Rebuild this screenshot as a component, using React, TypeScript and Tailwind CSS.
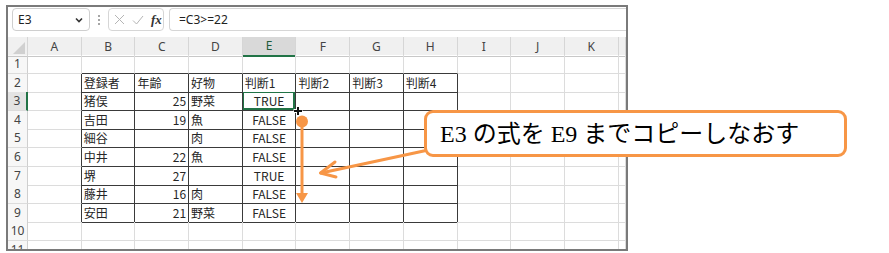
const COLS = ["A", "B", "C", "D", "E", "F", "G", "H", "I", "J", "K", ""];
const ROWS = [1, 2, 3, 4, 5, 6, 7, 8, 9, 10, 11];

const DATA: Record<number, string[]> = {
  2: ["", "登録者", "年齢", "好物", "判断1", "判断2", "判断3", "判断4"],
  3: ["", "猪俣", "25", "野菜", "TRUE"],
  4: ["", "吉田", "19", "魚", "FALSE"],
  5: ["", "細谷", "", "肉", "FALSE"],
  6: ["", "中井", "22", "魚", "FALSE"],
  7: ["", "堺", "27", "", "TRUE"],
  8: ["", "藤井", "16", "肉", "FALSE"],
  9: ["", "安田", "21", "野菜", "FALSE"],
};

const cellFont = { fontFamily: '"Noto Sans CJK JP", "Noto Sans", sans-serif' };

function Cell({ row, col }: { row: number; col: number }) {
  const inTable = row >= 2 && row <= 9 && col >= 1 && col <= 7;
  const darkRight = inTable || (col === 0 && row >= 2 && row <= 9);
  const darkBottom = inTable || (row === 1 && col >= 1 && col <= 7);
  const text = DATA[row]?.[col] ?? "";
  const isNum = col === 2 && row >= 3;
  const isBool = col === 4 && row >= 3;
  const selected = row === 3 && col === 4;

  return (
    <div
      className={`relative flex h-full items-center overflow-hidden border-r border-b px-[2px] text-[12px] leading-none text-[#262626] ${
        darkRight ? "border-r-[#3a3a3a]" : "border-r-[#dcdcdc]"
      } ${darkBottom ? "border-b-[#3a3a3a]" : "border-b-[#dcdcdc]"} ${
        isNum ? "justify-end" : isBool ? "justify-center" : "justify-start"
      }`}
      style={cellFont}
    >
      <span className="whitespace-nowrap">{text}</span>
      {selected && (
        <div className="absolute -top-px -left-px h-[calc(100%+1px)] w-[calc(100%+1px)] border-2 border-[#217346]" />
      )}
    </div>
  );
}

function ColumnHeader() {
  return (
    <div className="grid h-[18px] shrink-0 grid-cols-[20px_repeat(11,53.7px)_1fr] bg-[#f0f0f0] text-[12px] text-[#444]" style={{ fontFamily: '"Noto Sans", "Liberation Sans", sans-serif' }}>
      <div className="relative border-r border-b border-r-[#d6d6d6] border-b-[#c8c8c8]">
        <svg className="absolute right-[2px] bottom-[2px]" width="12" height="12" viewBox="0 0 12 12">
          <polygon points="12,0 12,12 0,12" fill="#d0d0d0" />
        </svg>
      </div>
      {COLS.map((c, i) => (
        <div
          key={i}
          className={`flex items-center justify-center border-r border-r-[#d6d6d6] ${
            c === "E" ? "border-b-2 border-b-[#217346] bg-[#d9d9d9] text-[#1d5c39]" : "border-b border-b-[#c8c8c8]"
          }`}
        >
          {c}
        </div>
      ))}
    </div>
  );
}

function SheetRow({ row }: { row: number }) {
  return (
    <div className="grid h-[18.6px] shrink-0 grid-cols-[20px_repeat(11,53.7px)_1fr]">
      <div
        className={`flex items-center justify-center border-b border-b-[#dcdcdc] text-[12px] text-[#444] ${
          row === 3 ? "border-r-2 border-r-[#217346] bg-[#e3e3e3]" : "border-r border-r-[#cfcfcf] bg-[#f7f7f7]"
        }`}
        style={{ fontFamily: '"Noto Sans", "Liberation Sans", sans-serif' }}
      >
        {row}
      </div>
      {COLS.map((_, i) => (
        <Cell key={i} row={row} col={i} />
      ))}
    </div>
  );
}

function FormulaBar() {
  return (
    <div className="flex h-[30px] shrink-0 items-start bg-white pt-[1px] pl-[4px]" style={{ fontFamily: '"Noto Sans", "Liberation Sans", sans-serif' }}>
      <div className="flex h-[23px] w-[78px] items-center justify-between rounded-[4px] border border-[#cfcfcf] pr-[6px] pl-[5px] text-[12px] text-[#222]">
        <span>E3</span>
        <svg width="8" height="6" viewBox="0 0 8 6">
          <path d="M1 1.5 L4 4.5 L7 1.5" fill="none" stroke="#333" strokeWidth="1.6" />
        </svg>
      </div>
      <div className="flex h-[23px] w-[18px] flex-col items-center justify-center gap-[2px]">
        <span className="h-[2px] w-[2px] rounded-full bg-[#888]" />
        <span className="h-[2px] w-[2px] rounded-full bg-[#888]" />
        <span className="h-[2px] w-[2px] rounded-full bg-[#888]" />
      </div>
      <div className="flex h-[23px] w-[56px] items-center gap-[7px] rounded-[4px] border border-[#d6d6d6] pl-[5px]">
        <svg width="11" height="11" viewBox="0 0 11 11">
          <path d="M1 1 L10 10 M10 1 L1 10" stroke="#b5b5b5" strokeWidth="1" />
        </svg>
        <svg width="12" height="10" viewBox="0 0 12 10">
          <path d="M1 5.5 L4.5 9 L11 1" fill="none" stroke="#b5b5b5" strokeWidth="1" />
        </svg>
        <span className="text-[13px] font-bold italic text-[#333]" style={{ fontFamily: '"Liberation Serif", serif' }}>
          fx
        </span>
      </div>
      <div className="ml-[5px] flex h-[23px] flex-1 items-center rounded-l-[4px] border-y border-l border-[#d6d6d6] pl-[9px] text-[12px] text-[#222]">
        =C3&gt;=22
      </div>
    </div>
  );
}

function Annotations() {
  const orange = "#f79646";
  return (
    <svg className="pointer-events-none absolute top-0 left-0" width="889" height="253" viewBox="0 0 889 253">
      <line x1="302" y1="121" x2="302" y2="195" stroke={orange} strokeWidth="3" />
      <circle cx="302" cy="121.5" r="6" fill={orange} />
      <polygon points="296,193 308,193 302,203" fill={orange} />
      <line x1="426" y1="150.5" x2="321" y2="173" stroke={orange} strokeWidth="3" strokeLinecap="round" />
      <polyline points="335,162 320.5,173 336,177" fill="none" stroke={orange} strokeWidth="3" strokeLinecap="round" strokeLinejoin="round" />
      <path d="M293.5 111 H302.5 M298 106.5 V115.5" stroke="#fff" strokeWidth="4" />
      <path d="M294 111 H302 M298 107 V115" stroke="#111" strokeWidth="2" />
    </svg>
  );
}

export default function App() {
  return (
    <div className="relative h-[253px] w-[889px] overflow-hidden bg-white">
      <div className="mt-[5px] ml-[6px] flex h-[246px] w-[622px] flex-col overflow-hidden border-2 border-[#7a7a7a] bg-white">
        <FormulaBar />
        <ColumnHeader />
        {ROWS.map((r) => (
          <SheetRow key={r} row={r} />
        ))}
      </div>

      <Annotations />

      <div className="absolute top-[110px] left-[424px] flex h-[47px] w-[423px] items-center rounded-[9px] border-[3px] border-[#f79646] bg-white pl-[13px]">
        <span className="text-[24px] leading-none whitespace-nowrap text-black" style={{ fontFamily: '"Liberation Serif", "Noto Sans CJK JP", serif' }}>
          E3 の式を E9 までコピーしなおす
        </span>
      </div>
    </div>
  );
}
